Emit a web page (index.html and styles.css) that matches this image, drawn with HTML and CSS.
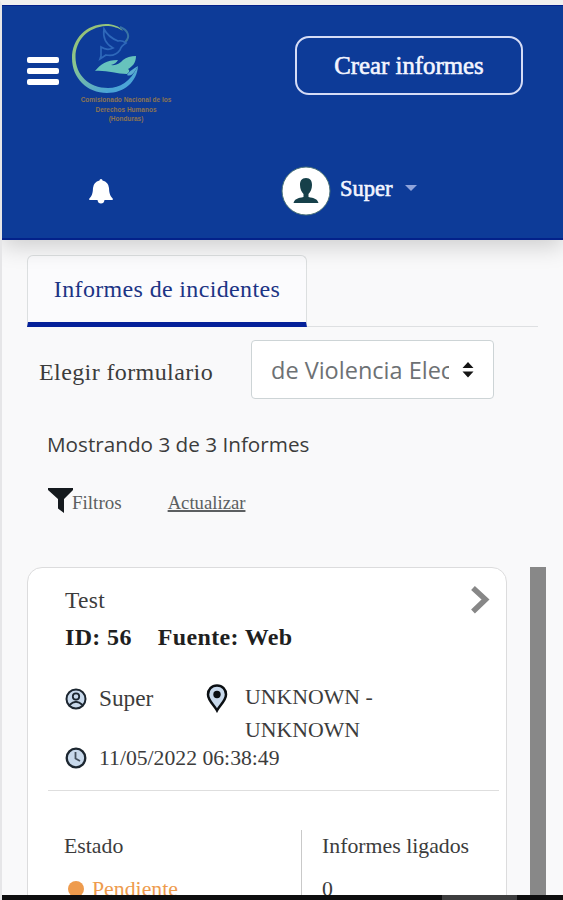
FILE: index.html
```html
<!DOCTYPE html>
<html lang="es">
<head>
  <meta charset="UTF-8">
  <meta name="viewport" content="width=device-width, initial-scale=1.0">
  <title>Informes de incidentes</title>
  <link rel="stylesheet" href="styles.css">
</head>
<body>
  <div class="page">
    <header class="header">
      <div class="header-top">
        <div class="menu">
          <span></span>
          <span></span>
          <span></span>
        </div>
        <div class="logo">
          <svg width="72" height="72" viewBox="0 0 72 72">
            <defs>
              <linearGradient id="ring" x1="0" y1="0" x2="0.5" y2="1">
                <stop offset="0" stop-color="#9cc06c"/>
                <stop offset="0.5" stop-color="#8ac690"/>
                <stop offset="1" stop-color="#4ba5d6"/>
              </linearGradient>
            </defs>
            <path d="M36 1C16 1 2 16 2 35C2 55 17 70 37 70C54 70 67 59 68 43C60 59 50 65 38 65C19 65 5.500 52 5.500 34C5.500 17 18 4 36 3C43 3 49 5 53 8C49 3 43 1 36 1Z" fill="url(#ring)"/>
            <path d="M55 19C61 14 58 7 50 4" fill="none" stroke="#3973a5" stroke-width="2"/>
            <path d="M31 33L31 24Q37 28 43 25Q32 19 34 6Q38 14 48 18Q52 17 56 20Q51 23 50 27Q45 34 36 32L30 36Z" fill="none" stroke="#2e68ba" stroke-width="1.7"/>
            <path d="M25 48C31 41 36 37 48 37Q46 41 41 42Q48 43 53 37Q58 33 66 33C66 40 62 44 58 46Q61 48 57 51C46 51 36 47 25 48Z" fill="#67c3bd"/>
            <path d="M68 43Q59 48 57 52Q61 54 65 48Z" fill="#5aacd2"/>
          </svg>
          <p>Comisionado Nacional de los<br>Derechos Humanos<br>(Honduras)</p>
        </div>
        <button class="btn-crear">Crear informes</button>
      </div>
      <div class="header-bottom">
        <svg class="bell" width="26" height="26" viewBox="0 0 26 26">
          <path d="M11.5 2.5Q11.5 1 13 1Q14.5 1 14.5 2.5Q20.5 4 21 10Q21.2 16 23 18.5L25 21Q25 22 24 22H16.5Q16 25.5 13 25.5Q10 25.5 9.5 22H2Q1 22 1 21L3 18.5Q4.800 16 5 10Q5.500 4 11.500 2.500Z" fill="#fff"/>
        </svg>
        <div class="user">
          <svg width="50" height="50" viewBox="0 0 50 50">
            <circle cx="25" cy="25" r="24" fill="#fff" stroke="#466f75" stroke-width="1"/>
            <path d="M25 12C20.500 12 19 15 19 19C19 23 20.500 26 22.500 28V31C17 32 13.500 33 12.500 37H37.500C36.500 33 33 32 27.500 31V28C29.500 26 31 23 31 19C31 15 29.500 12 25 12Z" fill="#16404a"/>
          </svg>
          <span class="user-name">Super</span>
          <span class="caret"></span>
        </div>
      </div>
    </header>

    <main class="content">
      <div class="tabs">
        <div class="tab">Informes de incidentes</div>
      </div>

      <div class="form-row">
        <span class="form-label">Elegir formulario</span>
        <div class="select">
          <span class="select-text">de Violencia Elec</span>
          <svg width="12" height="16" viewBox="0 0 12 16">
            <path d="M6 0L11.500 6H0.500ZM0.500 9.500H11.500L6 15.500Z" fill="#151515"/>
          </svg>
        </div>
      </div>

      <p class="count">Mostrando 3 de 3 Informes</p>

      <div class="actions">
        <svg width="25" height="25" viewBox="0 0 25 25">
          <path d="M0 0H25V2L16 11V25L10 20.500V11L0 2Z" fill="#151a1e"/>
        </svg>
        <span>Filtros</span>
        <a class="actualizar">Actualizar</a>
      </div>

      <div class="list">
        <article class="card">
          <div class="card-head">
            <div>
              <p class="card-title">Test</p>
              <p class="card-id"><span>ID: 56</span><span>Fuente: Web</span></p>
            </div>
            <svg class="chevron" width="20" height="30" viewBox="0 0 20 30">
              <path d="M3 3L15.500 14.500L3 26.500" fill="none" stroke="#878787" stroke-width="5.500"/>
            </svg>
          </div>

          <div class="meta">
            <svg width="22" height="22" viewBox="0 0 22 22">
              <circle cx="11" cy="11" r="9.500" fill="#c8d9ec" stroke="#1c2630" stroke-width="2"/>
              <circle cx="11" cy="8.500" r="3.200" fill="none" stroke="#1c2630" stroke-width="1.800"/>
              <path d="M4.500 17Q11 10.500 17.500 17" fill="none" stroke="#1c2630" stroke-width="1.800"/>
            </svg>
            <span class="autor">Super</span>
            <svg class="pin" width="22" height="29" viewBox="0 0 22 29">
              <path d="M11 1.500C5.500 1.500 2 5.500 2 10.500C2 16.500 8 21 11 26.500C14 21 20 16.500 20 10.500C20 5.500 16.500 1.500 11 1.500Z" fill="#c8d9ec" stroke="#0b0f13" stroke-width="2.500"/>
              <circle cx="11" cy="10.500" r="3.700" fill="#0b0f13"/>
            </svg>
            <span class="lugar">UNKNOWN -<br>UNKNOWN</span>
          </div>
          <div class="fecha">
            <svg width="22" height="22" viewBox="0 0 22 22">
              <circle cx="11" cy="11" r="9.300" fill="#c8d9ec" stroke="#1c2630" stroke-width="2.300"/>
              <path d="M10.500 5V11.500L15 14" fill="none" stroke="#45515e" stroke-width="1.800"/>
            </svg>
            <span>11/05/2022 06:38:49</span>
          </div>

          <div class="card-foot">
            <div class="estado">
              <p>Estado</p>
              <p class="pendiente"><span class="dot"></span>Pendiente</p>
            </div>
            <div class="ligados">
              <p>Informes ligados</p>
              <p>0</p>
            </div>
          </div>
        </article>
        <div class="scrollbar"></div>
      </div>
    </main>

    <div class="bottom-bar"><span></span></div>
  </div>
</body>
</html>
```

FILE: styles.css
```css
* {
  box-sizing: border-box;
}
body {
  margin: 0;
  background-color: #f9f9fa;
  font-family: "Liberation Serif", serif;
  color: #3c3c3c;
}
p {
  margin: 0;
}
svg {
  display: block;
  flex-shrink: 0;
}
.page {
  display: flex;
  flex-direction: column;
  height: 900px;
  overflow: hidden;
  border-top: 5px solid #f0f0ef;
  border-left: 2px solid #e6e6e8;
}

/* cabecera */
.header {
  flex: none;
  height: 235px;
  background-color: #0d3b98;
  border-top: 1px solid #03218a;
  border-bottom: 2px solid #03218a;
  box-shadow: 0 6px 22px rgba(0, 0, 0, 0.18);
  color: #f3f5ff;
}
.header-top {
  display: flex;
  height: 134px;
  padding-left: 25px;
}
.menu {
  display: flex;
  flex-direction: column;
  gap: 5px;
  margin-top: 51px;
}
.menu span {
  width: 32px;
  height: 6px;
  border-radius: 2px;
  background-color: #fff;
}
.logo {
  width: 104px;
  margin: 17px 0 0 11px;
}
.logo p {
  margin-left: 8px;
  font-family: "Liberation Sans", sans-serif;
  font-size: 6.500px;
  font-weight: bold;
  line-height: 9.5px;
  text-align: center;
  white-space: nowrap;
  color: #8b7453;
}
.btn-crear {
  width: 228px;
  height: 59px;
  margin: 30px 0 0 121px;
  padding: 0;
  background: none;
  border: 2px solid #d5dcf6;
  border-radius: 14px;
  color: #f3f5ff;
  font-family: inherit;
  font-size: 24.800px;
  -webkit-text-stroke: 0.6px #f3f5ff;
}
.header-bottom {
  display: flex;
  align-items: center;
  height: 98px;
  padding: 3px 0 0 86px;
}
.user {
  display: flex;
  align-items: center;
  margin-left: 167px;
}
.user-name {
  margin: 0 12px 3px 9px;
  font-size: 22.500px;
  -webkit-text-stroke: 0.6px #f3f5ff;
}
.caret {
  margin-bottom: 6px;
  border: 6px solid transparent;
  border-top-color: #8fa4dc;
  border-bottom: 0;
}

/* contenido */
.content {
  flex: 1;
  min-height: 0;
  padding: 15px 0 0 25px;
  overflow: hidden;
}
.header {
  position: relative;
}
.tabs {
  width: 511px;
  height: 72px;
  border-bottom: 1px solid #dee0e2;
}
.tab {
  width: 280px;
  height: 72px;
  background-color: rgba(252, 252, 253, 0.7);
  border: 1px solid #dcdfe0;
  border-bottom: 5px solid #05219a;
  border-radius: 6px 6px 0 0;
  color: #1c3485;
  font-size: 24px;
  letter-spacing: 0.35px;
  line-height: 66px;
  text-align: center;
}
.form-row {
  display: flex;
  align-items: center;
  margin-top: 13px;
  padding-left: 12px;
}
.form-label {
  width: 212px;
  padding-top: 5px;
  font-size: 24px;
  letter-spacing: 0.4px;
}
.select {
  display: flex;
  align-items: center;
  width: 243px;
  height: 59px;
  padding-left: 19px;
  background-color: #fff;
  border: 1px solid #cdd4d6;
  border-radius: 4px;
}
.select-text {
  width: 178px;
  margin-right: 13px;
  overflow: hidden;
  white-space: nowrap;
  color: #6d7174;
  font-family: "Open Sans", sans-serif;
  font-size: 23.500px;
}
.count {
  margin-top: 30px;
  padding-left: 20px;
  font-family: "Open Sans", sans-serif;
  font-size: 20.700px;
  line-height: 31px;
}
.actions {
  display: flex;
  align-items: center;
  height: 30px;
  margin-top: 25px;
  padding-left: 21px;
  font-size: 19px;
  color: #5c5f61;
}
.actions span {
  margin-left: -1px;
  padding-top: 6px;
}
.actualizar {
  margin-left: 46px;
  padding-top: 6px;
  font-size: 18.700px;
  text-decoration: underline;
  text-decoration-thickness: 2px;
}
.list {
  display: flex;
  align-items: flex-start;
  margin-top: 52px;
}

/* tarjeta */
.card {
  width: 480px;
  height: 400px;
  background-color: #fff;
  border: 1px solid #dcdcdd;
  border-radius: 15px;
  font-size: 21.800px;
}
.card-head {
  display: flex;
  justify-content: space-between;
  padding: 14px 16px 0 37px;
}
.card-title {
  font-size: 23.500px;
  letter-spacing: 0.3px;
  line-height: 37px;
}
.card-id {
  display: flex;
  gap: 26px;
  color: #1f1f1f;
  font-size: 24px;
  font-weight: bold;
  letter-spacing: 0.350px;
  line-height: 37px;
}
.chevron {
  margin-top: 3px;
}
.meta {
  display: flex;
  align-items: flex-start;
  padding: 25px 0 0 37px;
  line-height: 33px;
}
.meta > svg {
  margin-top: 7px;
}
.autor {
  width: 94px;
  margin: 1px 0 0 12px;
  font-size: 23.300px;
}
.meta > .pin {
  margin: 3px 0 0 13px;
}
.lugar {
  margin-left: 17px;
}
.fecha {
  display: flex;
  align-items: center;
  gap: 12px;
  height: 24px;
  margin-top: -1px;
  padding-left: 37px;
  font-size: 21.700px;
}
.card-foot {
  display: flex;
  margin: 20px 7px 0 20px;
  padding-top: 39px;
  border-top: 1px solid #dedede;
  line-height: 32px;
}
.estado {
  width: 253px;
  padding-left: 16px;
}
.ligados {
  height: 120px;
  padding-left: 20px;
  border-left: 1px solid #c9c9c9;
}
.card-foot p + p {
  margin-top: 11px;
}
.pendiente {
  display: flex;
  align-items: center;
  color: #ee9b4d;
}
.dot {
  width: 16px;
  height: 16px;
  margin: 0 8px 0 4px;
  border-radius: 50%;
  background-color: #ee9b4d;
}
.scrollbar {
  width: 16px;
  height: 400px;
  margin-left: 23px;
  background-color: #888;
}
.bottom-bar {
  flex: none;
  height: 5px;
  margin-left: -2px;
  background-color: #0e0e0f;
  position: relative;
}
.bottom-bar span {
  display: block;
  width: 75px;
  height: 5px;
  margin-left: 442px;
  background-color: #3d3d3e;
}
```
